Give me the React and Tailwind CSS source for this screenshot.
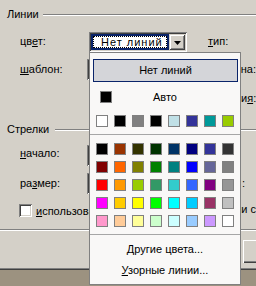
const recent = [
  'bg-[#ffffff]', 'bg-[#000000]', 'bg-[#808080]', 'bg-[#000000]',
  'bg-[#c0e0e6]', 'bg-[#333399]', 'bg-[#009999]', 'bg-[#99cc00]',
];

const palette = [
  'bg-[#000000]', 'bg-[#993300]', 'bg-[#333300]', 'bg-[#003300]', 'bg-[#003366]', 'bg-[#000080]', 'bg-[#333399]', 'bg-[#333333]',
  'bg-[#800000]', 'bg-[#ff6600]', 'bg-[#808000]', 'bg-[#008000]', 'bg-[#008080]', 'bg-[#0000ff]', 'bg-[#666699]', 'bg-[#808080]',
  'bg-[#ff0000]', 'bg-[#ff9900]', 'bg-[#99cc00]', 'bg-[#339966]', 'bg-[#33cccc]', 'bg-[#3366ff]', 'bg-[#800080]', 'bg-[#969696]',
  'bg-[#ff00ff]', 'bg-[#ffcc00]', 'bg-[#ffff00]', 'bg-[#00ff00]', 'bg-[#00ffff]', 'bg-[#00ccff]', 'bg-[#993366]', 'bg-[#c0c0c0]',
  'bg-[#ff99cc]', 'bg-[#ffcc99]', 'bg-[#ffff99]', 'bg-[#ccffcc]', 'bg-[#ccffff]', 'bg-[#99ccff]', 'bg-[#cc99ff]', 'bg-[#ffffff]',
];

function Swatch({ c }) {
  return <div className={`w-[12px] h-[12px] border border-[#808080] ${c}`} />;
}

function Etched() {
  return <div className="mt-[6px] flex-1 h-[2px] border-t border-b border-t-[#808080] border-b-white" />;
}

function SunkenCombo() {
  return (
    <div className="w-[100px] h-[21px] bg-white shrink-0 shadow-[inset_1px_1px_0_#808080,inset_-1px_-1px_0_#ffffff,inset_2px_2px_0_#404040,inset_-2px_-2px_0_#d4d0c8]" />
  );
}

function FocusedCombo() {
  return (
    <div className="w-[98px] h-[20px] bg-white p-[2px] flex shrink-0 shadow-[inset_1px_1px_0_#808080,inset_-1px_-1px_0_#ffffff,inset_2px_2px_0_#404040,inset_-2px_-2px_0_#d4d0c8]">
      <div className="w-[78px] h-full border-2 border-[#0a246a] bg-white">
        <div className="h-full border border-dotted border-black pl-[7px] tracking-[1px] leading-[10px] whitespace-nowrap">
          Нет линий
        </div>
      </div>
      <div className="w-[16px] h-full bg-[#d4d0c8] flex items-center justify-center shadow-[inset_1px_1px_0_#d4d0c8,inset_-1px_-1px_0_#404040,inset_2px_2px_0_#ffffff,inset_-2px_-2px_0_#808080]">
        <svg width="7" height="4" viewBox="0 0 7 4" className="mt-[1px]">
          <polygon points="0,0 7,0 3.5,4" fill="#000" />
        </svg>
      </div>
    </div>
  );
}

export default function App() {
  return (
    <div className="relative w-[256px] h-[286px] overflow-hidden bg-[#d4d0c8] font-['Liberation_Sans',Arial,sans-serif] text-[11px] leading-[13px] text-black">
      <div className="flex flex-col h-full">
        {/* Линии */}
        <div className="mt-[8px] h-[13px] flex pl-[7px]">
          <span className="w-[36px] whitespace-nowrap">Линии</span>
          <Etched />
        </div>

        {/* цвет / тип */}
        <div className="mt-[11px] h-[20px] flex pl-[20px] whitespace-nowrap">
          <span className="w-[69px] mt-[3px]">цв<span className="underline">е</span>т:</span>
          <FocusedCombo />
          <span className="ml-[21px] mt-[3px]"><span className="underline">т</span>ип:</span>
        </div>

        {/* шаблон / толщина */}
        <div className="mt-[7px] h-[21px] flex pl-[20px] whitespace-nowrap">
          <span className="w-[67px] mt-[4px]"><span className="underline">ш</span>аблон:</span>
          <SunkenCombo />
          <span className="ml-[54px] mt-[4px]">на:</span>
        </div>

        {/* right column label */}
        <div className="mt-[12px] h-[13px] flex pl-[241px] whitespace-nowrap">
          <span>и<span className="underline">я</span>:</span>
        </div>

        {/* Стрелки */}
        <div className="mt-[18px] h-[13px] flex pl-[7px]">
          <span className="w-[48px] whitespace-nowrap">Стрелки</span>
          <Etched />
        </div>

        {/* начало */}
        <div className="mt-[9px] h-[21px] flex pl-[20px] whitespace-nowrap">
          <span className="w-[67px] mt-[2px]"><span className="underline">н</span>ачало:</span>
          <SunkenCombo />
        </div>

        {/* размер */}
        <div className="mt-[7px] h-[21px] flex pl-[20px] whitespace-nowrap">
          <span className="w-[67px] mt-[4px]">ра<span className="underline">з</span>мер:</span>
          <SunkenCombo />
          <span className="ml-[55px] mt-[4px]">:</span>
        </div>

        {/* checkbox */}
        <div className="mt-[10px] h-[13px] flex pl-[19px] whitespace-nowrap">
          <div className="w-[13px] h-[13px] shrink-0 bg-white shadow-[inset_1px_1px_0_#808080,inset_-1px_-1px_0_#ffffff,inset_2px_2px_0_#404040,inset_-2px_-2px_0_#d4d0c8]" />
          <span className="ml-[4px] w-[205px] overflow-hidden mt-[1px]">
            <span className="underline">и</span>спользовать для всех новых линий
          </span>
          <span className="mt-[-1px]">ии с</span>
        </div>

        {/* separator */}
        <div className="mt-[12px] h-[2px] border-t border-b border-t-[#808080] border-b-white" />

        {/* buttons */}
        <div className="mt-[9px] h-[23px] flex pl-[243px]">
          <div className="w-[75px] h-[23px] shrink-0 bg-[#d4d0c8] shadow-[inset_1px_1px_0_#ffffff,inset_-1px_-1px_0_#404040,inset_-2px_-2px_0_#808080]" />
        </div>

        {/* window bottom edge */}
        <div className="mt-[5px] h-[2px] border-t border-b border-t-[#808080] border-b-[#404040]" />
        <div className="flex-1 bg-[#9c9280]" />
      </div>

      {/* Dropdown palette */}
      <div className="absolute left-[89px] top-[52px] w-[152px] h-[233px] border border-[#808080] bg-[#f9f8f7] flex flex-col">
        <div className="mt-[6px] ml-[3px] w-[145px] h-[23px] border border-[#0a246a] bg-[#d4d5d9] flex items-center justify-center whitespace-nowrap">
          Нет линий
        </div>

        <div className="mt-[9px] h-[12px] flex">
          <div className="ml-[10px] w-[12px] h-[12px] border border-[#808080] bg-black" />
          <div className="flex-1 text-center leading-[12px]">Авто</div>
          <div className="w-[22px]" />
        </div>

        <div className="mt-[12px] ml-[6px] flex gap-[6px]">
          {recent.map((c, i) => (
            <Swatch key={i} c={c} />
          ))}
        </div>

        <div className="mt-[7px] h-px bg-[#a6a6a6]" />

        <div className="mt-[8px] ml-[6px] grid grid-cols-8 gap-[6px] w-fit">
          {palette.map((c, i) => (
            <Swatch key={i} c={c} />
          ))}
        </div>

        <div className="mt-[7px] h-px bg-[#a6a6a6]" />

        <div className="mt-[8px] h-[13px] text-center whitespace-nowrap">
          <span className="underline">Д</span>ругие цвета...
        </div>
        <div className="mt-[8px] h-[13px] text-center whitespace-nowrap">
          <span className="underline">У</span>зорные линии...
        </div>
      </div>
    </div>
  );
}
